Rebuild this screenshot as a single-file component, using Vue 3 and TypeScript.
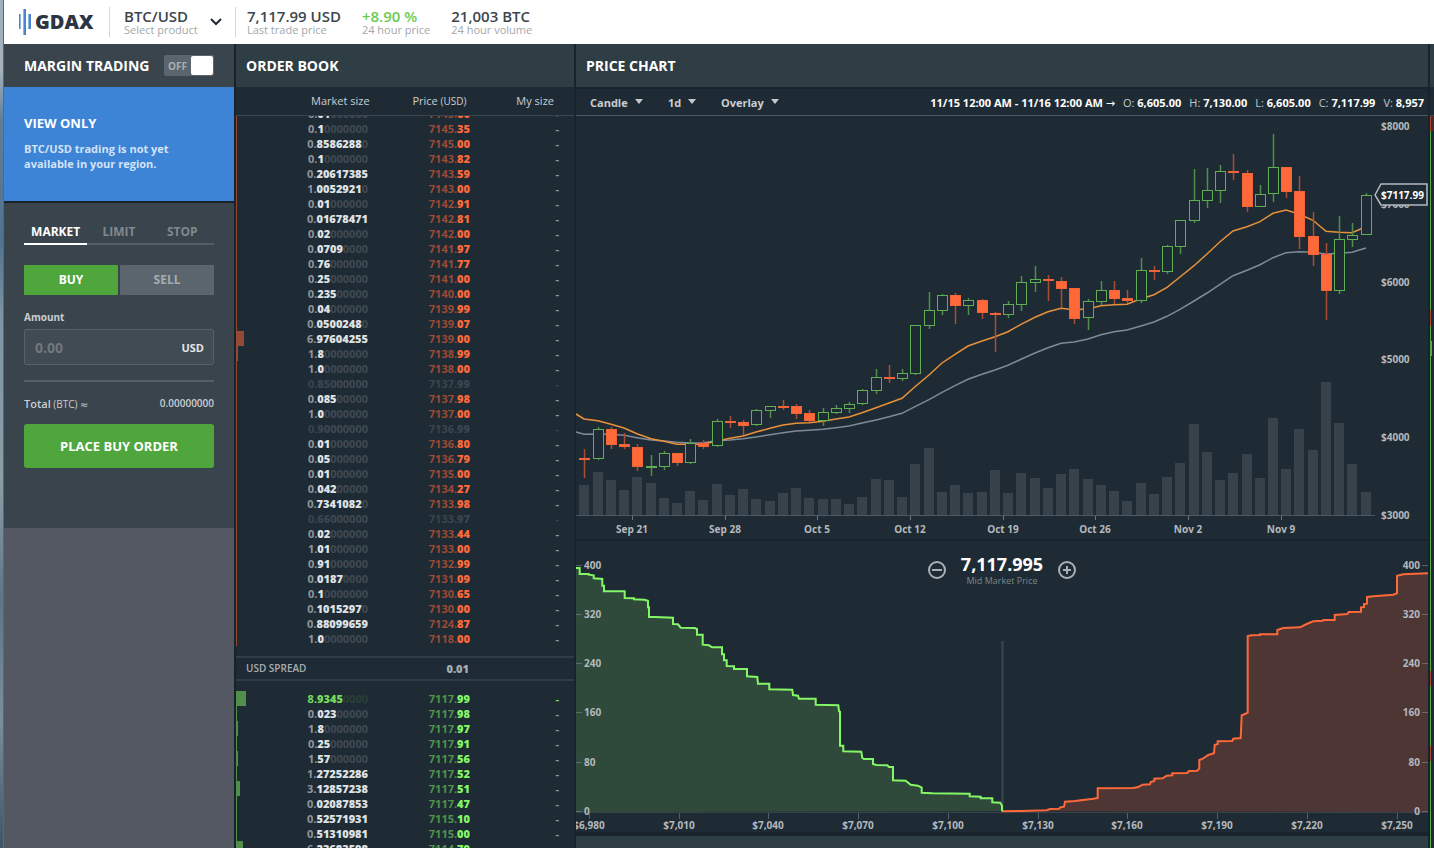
<script setup lang="ts">
import { ref } from 'vue'

interface Level {
  int: string
  sig: string
  zeros: string
  whole: string
  cents: string
  bar: number
  muted: boolean
  best: boolean
}

interface Candle {
  x: number
  high: number
  top: number
  height: number
  low: number
  up: boolean
  volume: number
}

const BAR_SCALE = 1.15

function parseLevels(source: string, bestIndex = -1): Level[] {
  return source
    .trim()
    .split(/\s+/)
    .map((entry, index) => {
      const muted = entry.startsWith('~')
      const [size, price] = entry.replace('~', '').split('@')
      const [int, frac] = size.split('.')
      const [whole, cents] = price.split('.')
      return {
        int: int + '.',
        sig: frac,
        zeros: '0'.repeat(8 - frac.length),
        whole: whole + '.',
        cents,
        bar: Math.max(1, Math.round(Number(size) * BAR_SCALE)),
        muted,
        best: index === bestIndex,
      }
    })
}

const asks = parseLevels(`
  0.01@7145.60 0.1@7145.35 0.8586288@7145.00 0.1@7143.82 0.20617385@7143.59 1.0052921@7143.00
  0.01@7142.91 0.01678471@7142.81 0.02@7142.00 0.0709@7141.97 0.76@7141.77 0.25@7141.00
  0.235@7140.00 0.04@7139.99 0.0500248@7139.07 6.97604255@7139.00 1.8@7138.99 1.0@7138.00
  ~0.85@7137.99 0.085@7137.98 1.0@7137.00 ~0.90@7136.99 0.01@7136.80 0.05@7136.79
  0.01@7135.00 0.042@7134.27 0.7341082@7133.98 ~0.66@7133.97 0.02@7133.44 1.01@7133.00
  0.91@7132.99 0.0187@7131.09 0.1@7130.65 0.1015297@7130.00 0.88099659@7124.87 1.0@7118.00
`)

const bids = parseLevels(
  `
  8.9345@7117.99 0.023@7117.98 1.8@7117.97 0.25@7117.91 1.57@7117.56 1.27252286@7117.52
  3.12857238@7117.51 0.02087853@7117.47 0.52571931@7115.10 0.51310981@7115.00 6.23683598@7114.79
`,
  0,
)

const STEP = 13.244
const FIRST = 8.3
const centre = (index: number) => Math.round(FIRST + STEP * index)

/* Each row: high, body top, body bottom, low, direction (1 = up), volume top; in thirds of a chart unit. */
const candleBlocks: { base: number; rows: number[][] }[] = [
  {
    base: 702,
    rows: [
      [297, 324, 327, 383, 0, 406], [231, 237, 328, 330, 1, 367], [231, 237, 284, 297, 0, 391],
      [249, 282, 292, 297, 0, 420], [282, 290, 351, 362, 0, 382], [315, 348, 352, 378, 1, 400],
      [303, 309, 350, 359, 1, 445], [309, 309, 340, 347, 0, 460], [267, 279, 340, 341, 1, 423],
      [270, 279, 290, 297, 0, 450], [207, 213, 289, 291, 1, 403], [198, 214, 217, 234, 0, 436],
      [210, 216, 227, 256, 0, 417], [177, 181, 226, 228, 1, 448], [167, 169, 182, 203, 1, 454],
      [150, 168, 171, 180, 0, 430], [162, 168, 191, 207, 0, 415], [180, 189, 213, 217, 0, 445],
      [174, 186, 212, 228, 1, 446], [165, 175, 188, 191, 1, 447], [156, 163, 178, 188, 1, 463],
      [117, 120, 163, 164, 1, 441],
    ],
  },
  {
    base: 342,
    rows: [
      [417, 442, 482, 491, 1, 747], [405, 441, 446, 459, 0, 751], [417, 430, 447, 454, 1, 801],
      [284, 286, 432, 435, 1, 702], [186, 241, 287, 297, 1, 654], [192, 196, 242, 256, 1, 787],
      [189, 195, 227, 281, 0, 766], [205, 211, 227, 254, 1, 790], [208, 211, 250, 266, 0, 787],
      [247, 250, 255, 365, 0, 721], [213, 223, 254, 265, 1, 788], [139, 157, 224, 242, 1, 729],
      [109, 148, 158, 186, 1, 745], [135, 148, 153, 212, 0, 774], [141, 153, 178, 234, 0, 731],
      [175, 175, 266, 281, 0, 717], [208, 214, 265, 300, 1, 748], [153, 179, 215, 226, 1, 766],
      [154, 180, 206, 223, 0, 784],
    ],
  },
  {
    base: -18,
    rows: [
      [539, 564, 573, 580, 0, 1174], [444, 481, 573, 578, 1, 1120], [468, 481, 486, 509, 0, 1153],
      [404, 409, 487, 492, 1, 1102], [331, 331, 410, 431, 1, 1060], [177, 271, 332, 338, 1, 943],
      [175, 241, 272, 293, 1, 1027], [165, 184, 242, 278, 1, 1111], [132, 184, 190, 209, 0, 1090],
      [180, 189, 290, 305, 0, 1033], [225, 251, 290, 291, 1, 1105], [72, 172, 251, 275, 1, 925],
      [171, 171, 245, 264, 0, 1078], [198, 243, 381, 417, 0, 958], [306, 378, 434, 467, 0, 1021],
      [400, 431, 542, 629, 0, 817], [318, 388, 542, 551, 1, 938], [339, 374, 391, 410, 1, 1062],
      [249, 254, 374, 374, 1, 1147],
    ],
  },
]

const candles: Candle[] = candleBlocks
  .flatMap(({ base, rows }) =>
    rows.map(([h, t, b, l, up, v]) => ({
      high: Math.round((base + h) / 3),
      top: Math.round((base + t) / 3),
      height: Math.max(1, Math.round((base + b) / 3) - Math.round((base + t) / 3) - 1),
      low: Math.round((base + l) / 3),
      up: up === 1,
      volume: Math.round((base + v) / 3),
    })),
  )
  .map((candle, index) => ({ ...candle, x: centre(index) }))

function averageLine(start: number, blocks: [number, number[]][]): string {
  const ys = blocks.flatMap(([base, values]) => values.map((v) => Math.round(((base + v) / 3) * 10) / 10))
  return [`0,${start}`, ...ys.map((y, index) => `${centre(index)},${y}`)].join(' ')
}

const fastAverage = averageLine(298, [
  [702, [207, 212, 223, 234, 251, 266, 274, 283, 283, 283, 273, 265, 258, 246, 235, 225, 220, 218, 214, 207, 201]],
  [342, [548, 533, 519, 505, 470, 435, 399, 373, 348, 333, 320, 305, 283, 262, 245, 235, 239, 237, 227, 224]],
  [-18, [583, 566, 554, 532, 501, 467, 432, 395, 363, 350, 335, 310, 300, 312, 331, 364, 367, 368, 350]],
])

const slowAverage = averageLine(316, [
  [702, [253, 252, 253, 256, 263, 270, 273, 277, 279, 278, 272, 270, 266, 261, 254, 248, 243, 241, 238, 233, 228]],
  [342, [579, 570, 560, 550, 530, 509, 487, 467, 448, 433, 420, 406, 388, 369, 353, 340, 336, 327, 314, 305]],
  [-18, [660, 648, 636, 619, 598, 573, 549, 523, 497, 481, 464, 443, 428, 425, 427, 432, 430, 427, 414]],
])

const dateTicks = [
  { x: 56, label: 'Sep 21' },
  { x: 149, label: 'Sep 28' },
  { x: 241, label: 'Oct 5' },
  { x: 334, label: 'Oct 12' },
  { x: 427, label: 'Oct 19' },
  { x: 519, label: 'Oct 26' },
  { x: 612, label: 'Nov 2' },
  { x: 705, label: 'Nov 9' },
]

const priceTicks = [
  { y: 10, label: '$8000' },
  { y: 88, label: '$7000' },
  { y: 166, label: '$6000' },
  { y: 243, label: '$5000' },
  { y: 321, label: '$4000' },
  { y: 399, label: '$3000' },
]

const depthTicks = [
  { y: 24, label: '400' },
  { y: 73, label: '320' },
  { y: 122, label: '240' },
  { y: 171, label: '160' },
  { y: 221, label: '80' },
  { y: 270, label: '0' },
]

const depthPrices = [
  { x: 13, label: '$6,980' },
  { x: 103, label: '$7,010' },
  { x: 192, label: '$7,040' },
  { x: 282, label: '$7,070' },
  { x: 372, label: '$7,100' },
  { x: 462, label: '$7,130' },
  { x: 551, label: '$7,160' },
  { x: 641, label: '$7,190' },
  { x: 731, label: '$7,220' },
  { x: 821, label: '$7,250' },
]

/* Depth outlines are stored in thirds of a chart unit and shifted to the panel's own origin. */
function outline(source: string, shift: number): string {
  return source
    .trim()
    .split(/\s+/)
    .map((pair) => {
      const [x, y] = pair.split(',').map(Number)
      return `${(x / 3 + shift).toFixed(1)},${(y / 3 - 1).toFixed(1)}`
    })
    .join(' ')
}

const bidDepth = outline(
  `
  6,84 17,84 17,102 44,102 44,104 59,106 59,115 85,117 85,137 90,137 90,154 152,154 152,174 180,175 180,178
  211,179 222,182 222,202 225,202 225,231 243,231 297,233 297,252 312,253 320,263 362,264 369,267 369,284
  386,284 386,314 405,316 414,322 444,322 444,343 450,343 450,361 458,361 458,378 480,379 480,387 519,387
  519,409 550,411 552,431 586,431 586,448 655,449 657,465 672,467 675,476 725,476 725,494 793,496 795,514
  798,515 798,617 808,617 808,634 862,635 865,654 870,657 897,657 897,672 907,675 940,676 945,681 957,681
  957,721 995,722 1010,734 1032,737 1043,743 1043,758 1075,760 1187,761 1187,769 1220,770 1220,775 1255,775
  1255,787 1279,788 1284,797 1284,814
`,
  -2,
)

const askDepth = outline(
  `
  36,814 95,813 170,811 180,807 207,806 212,802 222,800 225,785 255,783 310,776 323,774 323,745 430,744
  445,741 458,734 480,733 482,726 493,723 493,716 518,715 530,707 547,706 547,700 592,699 597,693 622,692
  628,685 628,660 640,655 655,645 672,640 674,615 683,612 683,604 727,603 730,596 752,594 755,526 765,522
  773,518 773,288 785,286 810,285 810,283 862,283 862,270 880,264 930,262 950,252 970,244 998,242 1000,240
  1034,240 1034,225 1072,222 1076,216 1113,215 1113,202 1122,201 1122,192 1131,191 1131,171 1160,168
  1210,164 1221,160 1221,107 1240,103 1314,100
`,
  414,
)

const ohlc = [
  { key: 'O', value: '6,605.00' },
  { key: 'H', value: '7,130.00' },
  { key: 'L', value: '6,605.00' },
  { key: 'C', value: '7,117.99' },
  { key: 'V', value: '8,957' },
]

const stats = [
  { value: '7,117.99 USD', label: 'Last trade price', up: false },
  { value: '+8.90 %', label: '24 hour price', up: true },
  { value: '21,003 BTC', label: '24 hour volume', up: false },
]

const tabs = ['MARKET', 'LIMIT', 'STOP']
const activeTab = ref('MARKET')
const side = ref<'BUY' | 'SELL'>('BUY')
const amount = ref('')
const margin = ref(false)
const chartType = ref('Candle')
const interval = ref('1d')
const overlay = ref('Overlay')
</script>

<template>
  <div class="desktop">
    <div class="app">
      <header class="topbar">
        <a class="logo" href="#" aria-label="GDAX">
          <svg width="13" height="28" viewBox="0 0 13 28" aria-hidden="true">
            <path d="M0 6h1v15H0z M5 1h2v26H5z M10 6h2v15h-2z" fill="#4a86cf" />
            <path d="M1 6h1v15H1z M4 1h1v26H4z M9 6h1v15H9z" fill="#8fb6e3" />
          </svg>
          <span>GDAX</span>
        </a>
        <button class="product" type="button">
          <span class="stat">
            <strong>BTC/USD</strong>
            <small>Select product</small>
          </span>
          <svg width="12" height="8" viewBox="0 0 12 8" aria-hidden="true">
            <path d="M1 1l5 5 5-5" fill="none" stroke="#1f2a33" stroke-width="2" />
          </svg>
        </button>
        <div class="stats">
          <div v-for="s in stats" :key="s.label" class="stat">
            <strong :class="{ rise: s.up }">{{ s.value }}</strong>
            <small>{{ s.label }}</small>
          </div>
        </div>
      </header>

      <main class="columns">
        <aside class="trade">
          <div class="panel-head trade-head">
            <h2>MARGIN TRADING</h2>
            <label class="toggle">
              <input v-model="margin" type="checkbox" aria-label="Margin trading" />
              <span class="toggle-text">OFF</span>
              <span class="knob"></span>
            </label>
          </div>
          <section class="notice">
            <h3>VIEW ONLY</h3>
            <p>BTC/USD trading is not yet available in your region.</p>
          </section>
          <form class="order" @submit.prevent>
            <div class="tabs">
              <button
                v-for="t in tabs"
                :key="t"
                type="button"
                :class="{ active: activeTab === t }"
                @click="activeTab = t"
              >
                {{ t }}
              </button>
            </div>
            <div class="sides">
              <button type="button" :class="{ active: side === 'BUY' }" @click="side = 'BUY'">BUY</button>
              <button type="button" :class="{ active: side === 'SELL' }" @click="side = 'SELL'">SELL</button>
            </div>
            <label class="amount-label" for="amount">Amount</label>
            <div class="amount">
              <input id="amount" v-model="amount" type="text" placeholder="0.00" />
              <span>USD</span>
            </div>
            <div class="total">
              <span><b>Total</b> (BTC) <span class="approx">≈</span></span>
              <b class="sum">0.00000000</b>
            </div>
            <button class="place" type="submit">PLACE BUY ORDER</button>
          </form>
        </aside>

        <section class="book">
          <div class="panel-head"><h2>ORDER BOOK</h2></div>
          <div class="book-titles">
            <span>Market size</span>
            <span class="price-title">Price <small>(USD)</small></span>
            <span>My size</span>
          </div>
          <div class="asks">
            <table aria-label="Asks">
              <tbody>
                <tr v-for="(row, i) in asks" :key="i" :class="{ muted: row.muted }">
                  <td class="depth"><div class="bar" :style="{ width: row.bar + 'px' }"></div></td>
                  <td class="size">{{ row.int }}<b>{{ row.sig }}</b><i>{{ row.zeros }}</i></td>
                  <td class="price">{{ row.whole }}<b>{{ row.cents }}</b></td>
                  <td class="mine">-</td>
                </tr>
              </tbody>
            </table>
          </div>
          <div class="spread">
            <span>USD SPREAD</span>
            <b>0.01</b>
          </div>
          <div class="bids">
            <table aria-label="Bids">
              <tbody>
                <tr v-for="(row, i) in bids" :key="i" :class="{ best: row.best }">
                  <td class="depth"><div class="bar" :style="{ width: row.bar + 'px' }"></div></td>
                  <td class="size">{{ row.int }}<b>{{ row.sig }}</b><i>{{ row.zeros }}</i></td>
                  <td class="price">{{ row.whole }}<b>{{ row.cents }}</b></td>
                  <td class="mine">-</td>
                </tr>
              </tbody>
            </table>
          </div>
        </section>

        <section class="charts">
          <div class="panel-head"><h2>PRICE CHART</h2></div>
          <div class="toolbar">
            <span class="pick type">
              <select v-model="chartType" aria-label="Chart type">
                <option>Candle</option>
                <option>Line</option>
              </select>
            </span>
            <span class="pick span">
              <select v-model="interval" aria-label="Interval">
                <option>1d</option>
                <option>6h</option>
                <option>1h</option>
              </select>
            </span>
            <span class="pick over">
              <select v-model="overlay" aria-label="Overlay">
                <option>Overlay</option>
                <option>EMA 12</option>
              </select>
            </span>
            <div class="ohlc">
              <b>11/15 12:00 AM - 11/16 12:00 AM <span class="arrow">→</span></b>
              <span v-for="o in ohlc" :key="o.key">{{ o.key }}: <b>{{ o.value }}</b></span>
            </div>
          </div>

          <svg class="chart" viewBox="0 0 852 423" role="img" aria-label="Price candles">
            <rect
              v-for="(c, i) in candles"
              :key="'v' + i"
              :x="c.x - 5"
              :y="c.volume"
              width="10"
              :height="399 - c.volume"
              fill="#37424b"
            />
            <path d="M0 399.5H799" stroke="#4d5a63" />
            <polyline :points="slowAverage" fill="none" stroke="#7f8a9b" stroke-width="1.5" />
            <polyline :points="fastAverage" fill="none" stroke="#e8913a" stroke-width="1.5" />
            <g v-for="(c, i) in candles" :key="'c' + i" :class="c.up ? 'up' : 'down'">
              <path class="wick" :d="`M${c.x + 0.5} ${c.high}V${c.low}`" />
              <rect class="body" :x="c.x - 4.5" :y="c.top + 0.5" width="10" :height="c.height" />
            </g>
            <g v-for="t in dateTicks" :key="t.label">
              <path :d="`M${t.x + 0.5} 400v4`" stroke="#6a757d" />
              <text class="axis" :x="t.x" y="417" text-anchor="middle">{{ t.label }}</text>
            </g>
            <text v-for="t in priceTicks" :key="t.label" class="axis" x="805" :y="t.y + 4">{{ t.label }}</text>
            <path d="M799 79l6-11h46v21h-46z" fill="#1e2b34" stroke="#b4bbc0" stroke-width="1.5" />
            <text class="axis tag" x="805" y="83">$7117.99</text>
          </svg>

          <div class="depth-panel">
            <svg class="chart" viewBox="0 0 852 291" role="img" aria-label="Market depth">
              <path d="M0 271.5H852" stroke="#36434c" />
              <path d="M426.5 100V271" stroke="#3b4750" stroke-width="2" />
              <polygon :points="`${bidDepth} 0,271`" fill="#2f4a3a" />
              <polygon :points="`${askDepth} 852,271`" fill="#4d3634" />
              <g v-for="t in depthTicks" :key="t.label">
                <path :d="`M0 ${t.y + 0.5}h6M846 ${t.y + 0.5}h6`" stroke="#8b969c" stroke-opacity="0.5" />
                <text class="axis" x="8" :y="t.y + 4">{{ t.label }}</text>
                <text class="axis" x="844" :y="t.y + 4" text-anchor="end">{{ t.label }}</text>
              </g>
              <g v-for="t in depthPrices" :key="t.label">
                <path :d="`M${t.x + 0.5} 272v6`" stroke="#55616a" />
                <text class="axis" :x="t.x" y="288" text-anchor="middle">{{ t.label }}</text>
              </g>
              <polyline :points="askDepth" fill="none" stroke="#ff6939" stroke-width="2" />
              <polyline :points="bidDepth" fill="none" stroke="#84f766" stroke-width="2" />
            </svg>
            <div class="mid">
              <button type="button" aria-label="Zoom out">
                <svg width="20" height="20" viewBox="0 0 20 20" aria-hidden="true">
                  <circle cx="10" cy="10" r="8" /><path d="M5 10h10" />
                </svg>
              </button>
              <div>
                <strong>7,117.995</strong>
                <small>Mid Market Price</small>
              </div>
              <button type="button" aria-label="Zoom in">
                <svg width="20" height="20" viewBox="0 0 20 20" aria-hidden="true">
                  <circle cx="10" cy="10" r="8" /><path d="M6 10h8M10 6v8" />
                </svg>
              </button>
            </div>
          </div>
          <div class="next-panel"></div>
        </section>

        <aside class="history">
          <div class="panel-head"></div>
          <div class="history-titles"></div>
          <svg width="4" height="732" viewBox="0 0 4 732" aria-hidden="true">
            <path d="M0 0h1v732H0z M0 225h2v15H0z" fill="#58a84c" />
            <path d="M1 0h3v15H1z" fill="#4a2b2a" />
            <path d="M0 0h1v15H0z M0 194h1v16H0z M0 555h1v15H0z M0 630h1v15H0z" fill="#a8452f" />
          </svg>
        </aside>
      </main>
    </div>
  </div>
</template>

<style>
body {
  margin: 0;
  background: #18232b;
}
</style>

<style scoped>
* {
  box-sizing: border-box;
}
.desktop {
  height: 100vh;
  padding-left: 3px;
  overflow: hidden;
  background: linear-gradient(#9eb0bc 0, #a4b2bc 70px, #5f7f98 120px, #4f7290 240px, #7f95a3 320px, #8d9da7 480px, #5e7585 600px, #7b8e9b 720px, #3f5564 100%);
  font-family: 'Open Sans', 'Noto Sans', sans-serif;
  font-size: 11px;
  color: #c9ced2;
}
.app {
  height: 100%;
  display: flex;
  flex-direction: column;
  border-left: 1px solid #3c6f9b;
  background: #18232b;
}
button,
input,
select {
  font-family: inherit;
  margin: 0;
  padding: 0;
  border: 0;
  background: none;
  color: inherit;
}
button {
  cursor: pointer;
}
h2,
h3,
p {
  margin: 0;
}

.topbar {
  flex: 0 0 44px;
  display: flex;
  align-items: center;
  background: #fff;
}
.logo {
  display: flex;
  align-items: center;
  gap: 3px;
  width: 106px;
  height: 30px;
  margin-right: 14px;
  padding-left: 15px;
  border-right: 1px solid #d3d7d9;
  color: #2b3544;
  font-size: 20px;
  font-weight: 800;
  line-height: 30px;
  text-decoration: none;
}
.product {
  display: flex;
  align-items: center;
  justify-content: space-between;
  width: 112px;
  height: 30px;
  margin-right: 11px;
  padding-right: 13px;
  border-right: 1px solid #d3d7d9;
  text-align: left;
}
.stats {
  display: flex;
  gap: 21px;
}
.stat {
  display: flex;
  flex-direction: column;
}
.stat strong {
  color: #3c464e;
  font-size: 15px;
  font-weight: 600;
  line-height: 16px;
}
.stat strong.rise {
  color: #6bcb50;
}
.stat small {
  color: #a3a8ac;
  font-size: 11px;
  line-height: 12px;
}
.product .stat,
.stats .stat {
  margin-top: -1px;
}

.columns {
  flex: 1;
  min-height: 0;
  display: grid;
  grid-template-columns: 230px 338px minmax(0, 1fr) 4px;
  gap: 2px;
}
.panel-head {
  flex: 0 0 43px;
  height: 43px;
  display: flex;
  align-items: center;
  padding: 0 10px;
  background: #2f3d45;
}
h2 {
  color: #fff;
  font-size: 14px;
  font-weight: 700;
  line-height: 18px;
}

.trade {
  background: #535862;
}
.trade-head {
  justify-content: space-between;
  padding: 0 20px;
  background: #3a444c;
}
.toggle {
  position: relative;
  display: flex;
  align-items: center;
  justify-content: space-between;
  width: 50px;
  height: 21px;
  padding: 0 1px 0 4px;
  border-radius: 2px;
  background: #5b656d;
}
.toggle input {
  position: absolute;
  inset: 0;
  width: 100%;
  height: 100%;
  opacity: 0;
}
.toggle-text {
  color: #a9afb4;
  font-size: 10px;
  font-weight: 700;
}
.knob {
  width: 22px;
  height: 19px;
  border-radius: 2px;
  background: #fff;
}
.notice {
  height: 116px;
  padding: 28px 20px 0;
  border-bottom: 2px solid #18232b;
  background: #3d84d7;
}
h3 {
  color: #fff;
  font-size: 13px;
  font-weight: 700;
  line-height: 17px;
}
.notice p {
  padding-top: 9px;
  padding-right: 20px;
  color: #d3e3f6;
  font-weight: 700;
  line-height: 15px;
}
.order {
  display: flex;
  flex-direction: column;
  padding: 18px 20px 60px;
  background: #3a444c;
}
.tabs {
  display: grid;
  grid-template-columns: repeat(3, 1fr);
  height: 24px;
  margin-bottom: 20px;
}
.tabs button {
  height: 24px;
  padding-bottom: 2px;
  border-bottom: 2px solid #535e67;
  color: #808990;
  font-size: 12px;
  font-weight: 700;
}
.tabs .active {
  border-color: #fff;
  color: #fff;
}
.sides {
  display: grid;
  grid-template-columns: 1fr 1fr;
  gap: 2px;
  margin-bottom: 14px;
}
.sides button {
  height: 30px;
  padding-bottom: 2px;
  border-radius: 1px;
  background: #5b656d;
  color: #a6adb2;
  font-size: 12px;
  font-weight: 700;
}
.sides .active {
  background: #4fa63d;
  color: #fff;
}
.amount-label {
  font-size: 10px;
  font-weight: 700;
  line-height: 16px;
  margin-bottom: 4px;
}
.amount {
  display: flex;
  align-items: center;
  height: 36px;
  margin-bottom: 15px;
  padding: 0 9px 0 10px;
  border: 1px solid #56616a;
  border-radius: 2px;
  background: #414b53;
}
.amount input {
  flex: 1;
  min-width: 0;
  color: #fff;
  font-size: 14px;
  font-weight: 700;
  outline: none;
}
.amount input::placeholder {
  color: #70777c;
  opacity: 1;
}
.amount span {
  color: #e3e6e8;
  font-weight: 700;
}
.total {
  display: flex;
  justify-content: space-between;
  align-items: center;
  height: 44px;
  border-top: 2px solid #535e67;
  font-size: 10px;
}
.total b {
  font-size: 11px;
  font-weight: 600;
}
.total .sum {
  font-size: 10px;
  font-weight: 600;
}
.approx {
  font-family: 'DejaVu Sans', sans-serif;
}
.place {
  height: 44px;
  border-radius: 3px;
  background: #4fa63d;
  color: #fff;
  font-size: 13px;
  font-weight: 700;
}

.book {
  display: flex;
  flex-direction: column;
  min-height: 0;
  background: #1f2b34;
}
.book-titles {
  flex: 0 0 29px;
  display: flex;
  justify-content: space-between;
  padding: 0 20px 0 75px;
  border-bottom: 1px solid #3a464f;
  line-height: 28px;
}
.price-title {
  padding-right: 7px;
}
.book-titles small {
  font-size: 10px;
}
.asks {
  flex: 1;
  min-height: 0;
  display: flex;
  flex-direction: column;
  justify-content: flex-end;
  overflow: hidden;
}
.bids {
  flex: 0 0 157px;
  overflow: hidden;
}
table {
  width: 100%;
  border-collapse: collapse;
  table-layout: fixed;
}
td {
  height: 15px;
  padding: 0;
  font-weight: 700;
  line-height: 15px;
  text-align: right;
}
td i {
  font-style: normal;
  color: #3f4a53;
}
.depth {
  width: 16px;
}
.bar {
  height: 15px;
}
.size {
  width: 116px;
  color: #8f969b;
}
.size b {
  color: #dfe2e4;
}
.price {
  width: 102px;
}
.mine {
  padding-right: 15px;
  color: #8f989e;
}
.asks .bar {
  background: #984936;
}
.asks .price {
  color: #9b4a35;
}
.asks .price b {
  color: #ff6939;
}
.bids .bar {
  background: #528f4c;
}
.bids .price {
  color: #4f9448;
}
.bids .price b {
  color: #84f766;
}
.muted td,
.muted td b,
.asks .muted .price,
.asks .muted .price b {
  color: #3a454e;
}
.best .size,
.best .size b,
.best .mine {
  color: #74dd5b;
}
.best .size i {
  color: #2a4036;
}
.spread {
  flex: 0 0 25px;
  display: flex;
  justify-content: space-between;
  margin: 10px 0;
  padding: 0 105px 0 10px;
  border-top: 2px solid #303d46;
  border-bottom: 2px solid #303d46;
  color: #a7adb2;
  font-weight: 600;
  line-height: 21px;
}
.spread span {
  font-size: 10px;
}

.charts {
  display: flex;
  flex-direction: column;
  min-width: 0;
  min-height: 0;
}
.toolbar {
  flex: 0 0 27px;
  display: flex;
  align-items: center;
  margin-top: 2px;
  padding: 2px 4px 0 14px;
  border-bottom: 1px solid #4d5a63;
  background: #1f2b34;
}
.pick {
  position: relative;
  flex: none;
}
.pick::after {
  content: '';
  position: absolute;
  right: 0;
  top: 4px;
  border: 4px solid transparent;
  border-top: 5px solid #c3c8cc;
  border-bottom: 0;
  pointer-events: none;
}
.pick select {
  display: block;
  width: 100%;
  height: 16px;
  appearance: none;
  font-size: 11px;
  font-weight: 700;
  line-height: 16px;
}
.pick option {
  background: #1f2b34;
}
.type {
  width: 53px;
  margin-right: 25px;
}
.span {
  width: 28px;
  margin-right: 25px;
}
.over {
  width: 58px;
}
.ohlc {
  flex: 1;
  display: flex;
  justify-content: flex-end;
  gap: 8px;
  color: #c3c8cc;
  line-height: 16px;
  white-space: nowrap;
}
.ohlc b {
  color: #fff;
  font-weight: 700;
}
.ohlc .arrow {
  font-family: 'DejaVu Sans', sans-serif;
  font-weight: 400;
}
.chart {
  display: block;
  flex: none;
  width: 100%;
  height: auto;
  background: #1f2b34;
}
.axis {
  fill: #b3b9bd;
  font-size: 10px;
  font-weight: 700;
}
.tag {
  fill: #fff;
}
.wick {
  stroke-width: 1.5;
}
.up .wick {
  stroke: #4f8f4b;
}
.up .body {
  fill: #1f2b34;
  stroke: #5fae52;
}
.down .wick {
  stroke: #a84e36;
}
.down .body {
  fill: #ff6939;
  stroke: #f06437;
}
.depth-panel {
  position: relative;
  margin: 2px 0 4px;
}
.mid {
  position: absolute;
  top: 12px;
  left: 0;
  right: 0;
  display: flex;
  justify-content: center;
  gap: 14px;
  text-align: center;
}
.mid button {
  height: 34px;
}
.mid button svg {
  display: block;
  fill: none;
  stroke: #aab0b5;
  stroke-width: 2;
}
.mid strong,
.mid small {
  display: block;
}
.mid strong {
  color: #fff;
  font-size: 18px;
  font-weight: 700;
  line-height: 22px;
}
.mid small {
  color: #7b858b;
  font-size: 9px;
  line-height: 12px;
}
.next-panel {
  flex: 1;
  background: #2f3d45;
}

.history {
  overflow: hidden;
  background: #1f2b34;
}
.history .panel-head {
  padding: 0;
}
.history-titles {
  height: 29px;
  border-bottom: 1px solid #3a464f;
}
.history svg {
  display: block;
}
</style>
